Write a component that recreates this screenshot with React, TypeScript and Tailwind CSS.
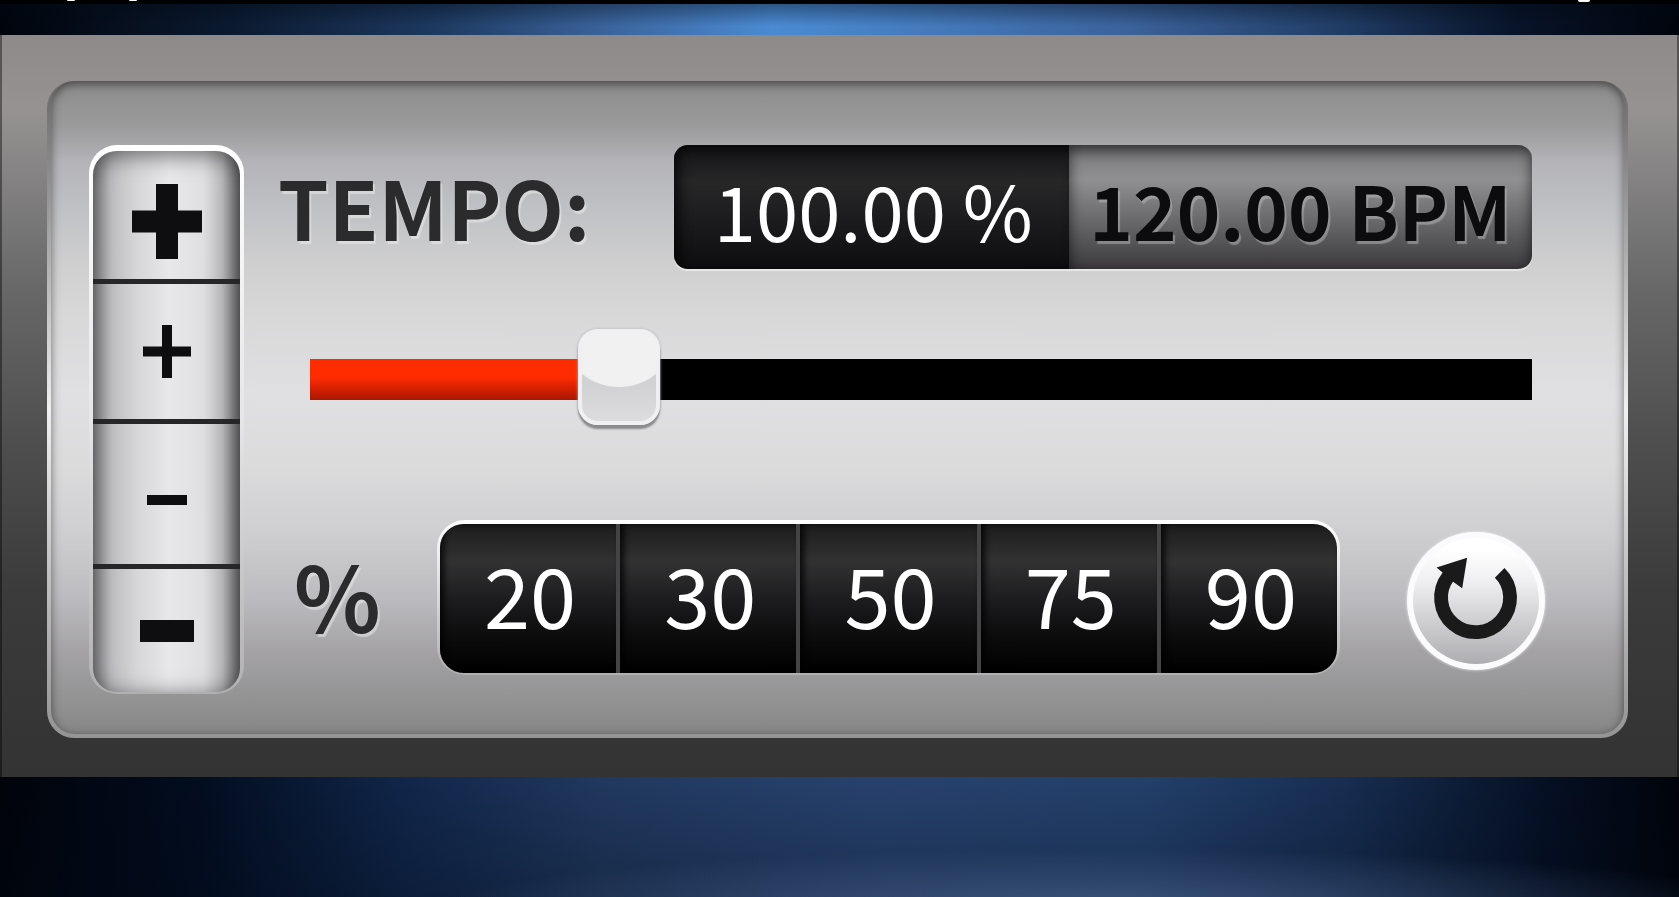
import { useState } from "react";
import { clsx } from "clsx";

const BASE_BPM = 120;
const MIN_TEMPO = 20;
const MAX_TEMPO = 360;
const PRESETS = [20, 30, 50, 75, 90];

const STEPS = [
  { label: "Increase by 1", delta: 1, cell: "h-32 pt-3", w: 70, h: 75, t: 22, plus: true },
  { label: "Increase by 0.1", delta: 0.1, cell: "h-[140px] border-t-[5px]", w: 48, h: 53, t: 10, plus: true },
  { label: "Decrease by 0.1", delta: -0.1, cell: "h-[145px] border-t-[5px] pt-3", w: 40, h: 10, t: 10, plus: false },
  { label: "Decrease by 1", delta: -1, cell: "h-32 border-t-[5px]", w: 54, h: 22, t: 22, plus: false },
];

function StepButtons({ onStep }: { onStep: (delta: number) => void }) {
  return (
    <div className="shrink-0 self-start rounded-[28px] bg-linear-to-b from-white via-[#e6e6e8] to-[#b0b0b0] px-1 pt-1.5 pb-0.5">
      <div className="flex w-[147px] flex-col overflow-hidden rounded-3xl bg-[linear-gradient(90deg,#8c8c8f,#bdbdc1_12%,#d6d6d8_30%,#e8e8ea_52%,#dfdfe1_75%,#b9b9bb_88%,#6e6e70)] shadow-[inset_0_4px_22px_rgba(0,0,0,0.55)]">
        {STEPS.map((step) => (
          <button
            key={step.label}
            type="button"
            aria-label={step.label}
            onClick={() => onStep(step.delta)}
            className={clsx("flex items-center justify-center border-[#262628]", step.cell)}
          >
            <svg width={step.w} height={step.h} fill="#0e0e10" aria-hidden="true">
              <rect y={(step.h - step.t) / 2} width={step.w} height={step.t} />
              {step.plus && <rect x={(step.w - step.t) / 2} width={step.t} height={step.h} />}
            </svg>
          </button>
        ))}
      </div>
    </div>
  );
}

function Readout({ tempo }: { tempo: number }) {
  const [unit, setUnit] = useState("percent");
  return (
    <div className="flex h-[124px] flex-1 overflow-hidden rounded-[14px] leading-none whitespace-nowrap shadow-[0_2px_1px_rgba(255,255,255,0.5)]">
      <button
        type="button"
        aria-pressed={unit === "percent"}
        onClick={() => setUnit("percent")}
        className="w-[46%] bg-[linear-gradient(180deg,#131316,#272728_30%,#1a1a1c_65%,#0d0d0f)] pt-1 pl-1 text-[76px] text-white shadow-[inset_6px_4px_12px_rgba(0,0,0,0.7)]"
      >
        {tempo.toFixed(2)} %
      </button>
      <button
        type="button"
        aria-pressed={unit === "bpm"}
        onClick={() => setUnit("bpm")}
        className="flex-1 bg-[linear-gradient(180deg,#77777a,#909092_28%,#6a6a6c_60%,#3c3a3c)] pt-1 text-[74px] font-bold text-[#0c0c0e] shadow-[inset_0_5px_14px_rgba(0,0,0,0.65)] [text-shadow:2px_3px_1px_rgba(190,190,190,0.5)]"
      >
        {((BASE_BPM * tempo) / 100).toFixed(2)} BPM
      </button>
    </div>
  );
}

function TempoSlider({ tempo, onChange }: { tempo: number; onChange: (value: number) => void }) {
  const filled = ((tempo - MIN_TEMPO) / (MAX_TEMPO - MIN_TEMPO)) * 100;
  return (
    <div className="relative mt-[58px] mr-[13px] ml-8 flex h-[100px] items-center pt-1">
      <div className="h-[41px] w-full bg-black">
        <div
          className="h-full bg-[linear-gradient(180deg,#ff2c00_45%,#d92000_70%,#a81800)]"
          style={{ width: `${filled}%` }}
        />
      </div>
      <input
        id="tempo"
        type="range"
        min={MIN_TEMPO}
        max={MAX_TEMPO}
        step={0.1}
        value={tempo}
        onChange={(e) => onChange(Number(e.target.value))}
        className="absolute inset-0 w-full cursor-pointer appearance-none bg-transparent [&::-webkit-slider-thumb]:h-[96px] [&::-webkit-slider-thumb]:w-[82px] [&::-webkit-slider-thumb]:appearance-none [&::-webkit-slider-thumb]:rounded-[20px] [&::-webkit-slider-thumb]:border-4 [&::-webkit-slider-thumb]:border-[#f0f0f3] [&::-webkit-slider-thumb]:bg-[radial-gradient(77%_62%_at_50%_0,#f1f1f2_98%,transparent),linear-gradient(180deg,#d2d2d5_60%,#dcdcdf)] [&::-webkit-slider-thumb]:shadow-[0_4px_2px_#8b8b8d,0_0_3px_#b0b0b3]"
      />
    </div>
  );
}

function ResetIcon() {
  return (
    <svg viewBox="0 0 140 140" className="size-full" aria-hidden="true">
      <path d="M94 41.5A35 35 0 1 1 42 45" fill="none" stroke="#1a1a1b" strokeWidth="14" />
      <path d="M30 36 61 26 56 57 46 50 36 41Z" fill="#1a1a1b" />
    </svg>
  );
}

export default function App() {
  const [tempo, setTempo] = useState(100);

  const update = (value: number) => setTempo(Math.min(MAX_TEMPO, Math.max(MIN_TEMPO, value)));

  return (
    <div className="flex min-h-screen flex-col bg-[#01040c] font-['Noto_Sans_CJK_SC','Open_Sans',sans-serif]">
      <div className="flex h-1 items-start bg-black pr-[89px] pl-[67px]">
        <span className="h-px w-2 rounded-b-full bg-white" />
        <span className="ml-[54px] h-px w-2 rounded-b-full bg-white" />
        <span className="ml-auto h-0.5 w-3 rounded-b-full bg-white" />
      </div>
      <div className="h-[31px] bg-[linear-gradient(180deg,rgba(0,10,20,0.4),transparent_70%),linear-gradient(90deg,#00040c,#0b1a30_14%,#1d3960_26%,#3a639b_36%,#4a8ad2_46%,#4680c4_52%,#3b629b_67%,#203c64_80%,#08142a_90%,#00040c)]" />

      <main className="border-x-2 border-black/40 bg-[linear-gradient(180deg,#8e8a89,#969292_10%,#8a8888_16%,#686868_34%,#4e4e4f_55%,#3b3b3c_75%,#333)] pt-[46px] pr-[49px] pb-[39px] pl-[45px]">
        <div className="rounded-[27px] bg-linear-to-b from-[#6a6868] via-[#f0f0f0] to-[#949494] px-1 pb-1">
          <section
            aria-label="Tempo control"
            className="flex gap-[34px] rounded-3xl bg-[linear-gradient(180deg,#8b8b8c,#9b9b9c_7%,#b2b2b7_12%,#bfc0c4_19%,#cfcfd0_28%,#d8d8d9_36%,#e0e0e2_48%,#dbdbdc_59%,#cfced0_69%,#bcbcc0_79%,#a5a3a5_87%,#929293_95%,#868687)] pt-16 pr-[79px] pb-10 pl-[38px] shadow-[inset_0_3px_10px_rgba(0,0,0,0.5)]"
          >
            <StepButtons onStep={(delta) => update(tempo + delta)} />

            <div className="min-w-0 flex-1">
              <div className="mr-[13px] flex items-center">
                <label
                  htmlFor="tempo"
                  className="w-[396px] pb-1 text-[81px] leading-none font-bold text-[#2b2b2d] [text-shadow:2px_3px_1px_rgba(240,240,240,0.5)]"
                >
                  TEMPO:
                </label>
                <Readout tempo={tempo} />
              </div>

              <TempoSlider tempo={tempo} onChange={update} />

              <div className="mt-[93px] flex items-center">
                <span
                  id="presets"
                  className="w-[159px] pb-2 pl-4 text-[90px] leading-none font-bold text-[#2b2b2d] [text-shadow:2px_3px_1px_rgba(240,240,240,0.5)]"
                >
                  %
                </span>
                <div className="flex-1 rounded-[28px] bg-linear-to-b from-white via-[#d8d8da] to-[#b0b0b0] px-[3px] pt-1 pb-0.5">
                  <div
                    role="group"
                    aria-labelledby="presets"
                    className="flex h-[149px] divide-x-4 divide-[#444446] overflow-hidden rounded-3xl bg-[linear-gradient(180deg,#1c1c1d,#323233_25%,#1d1d1f_50%,#0c0c0d_75%,#000)]"
                  >
                    {PRESETS.map((preset) => (
                      <button
                        key={preset}
                        type="button"
                        onClick={() => update(preset)}
                        className="flex-1 pb-2.5 pl-1 text-[83px] leading-none text-white shadow-[inset_4px_0_6px_rgba(0,0,0,0.8)]"
                      >
                        {preset}
                      </button>
                    ))}
                  </div>
                </div>
                <button
                  type="button"
                  aria-label="Reset tempo"
                  onClick={() => update(100)}
                  className="mt-1.5 ml-[67px] size-[138px] rounded-full bg-[linear-gradient(180deg,#fff_12%,#f0f0f2_35%,#d4d4d7_60%,#a9a9ad)] shadow-[inset_0_0_0_6px_#fbfbfd,0_0_3px_#eee]"
                >
                  <ResetIcon />
                </button>
              </div>
            </div>
          </section>
        </div>
      </main>

      <div className="min-h-[119px] flex-1 bg-[radial-gradient(40%_50%_at_66%_110%,rgba(90,115,160,0.55),transparent),linear-gradient(180deg,transparent,rgba(0,8,20,0.3)),linear-gradient(90deg,#00030a,#020d20_12%,#10264a_24%,#21395f_36%,#27426e_52%,#23406b_68%,#172e52_80%,#051024_92%,#00030a)]" />
    </div>
  );
}
